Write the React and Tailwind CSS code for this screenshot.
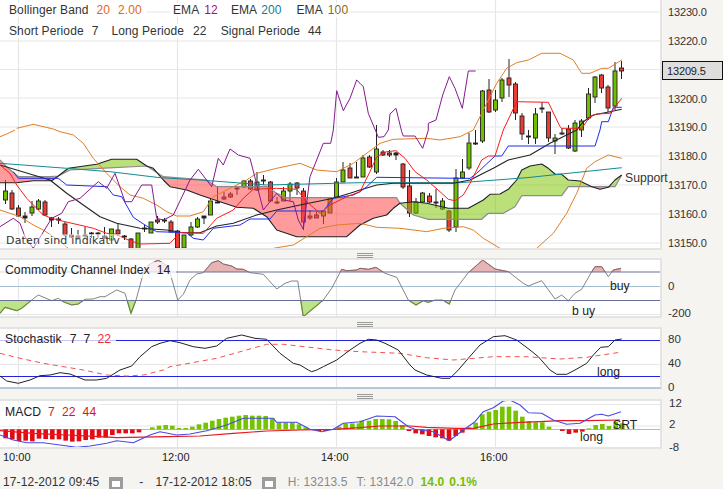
import React from "react";

const P = (ox, oy, pts) => pts.map(([x, y]) => `${(ox + x / 3).toFixed(1)},${(oy + y / 3).toFixed(1)}`);
const Z3 = (pts) => P(0, 130, pts);
const Z4 = (pts) => P(360, 130, pts);
const Z2 = (pts) => P(360, 0, pts);
const Z1 = (pts) => P(0, 0, pts);
const Z5 = (pts) => P(0, 250, pts);
const Z6 = (pts) => P(360, 250, pts);
const Z7 = (pts) => P(0, 370, pts);
const Z8 = (pts) => P(360, 370, pts);
const J = (...a) => a.flat().join(" ");

const candles = [
  [-2,180,204,191,200,"g"],[-1,190,210,193,209,"r"],[0,205,217,208,216,"r"],[1,212,223,216,218,"d"],[2,201,216,207,213,"g"],[3,199,210,201,209,"g"],[4,200,216,202,215,"r"],[5,217,227,218,220,"d"],[6,217,224,219,220,"d"],[7,222,236,224,235,"r"],[8,228,238,235,237,"r"],[9,230,240,236,238,"r"],[10,227,238,235,236,"d"],[11,232,238,233,234,"d"],[12,232,238,233,234,"d"],[13,227,239,236,238,"d"],[14,229,240,229,240,"g"],[15,223,236,230,234,"r"],[16,235,240,236,237,"d"],[17,238,249,239,249,"r"],[18,233,250,233,250,"g"],[19,225,232,228,229,"d"],[20,222,233,222,233,"g"],[21,216,224,220,222,"r"],[22,218,223,220,221,"d"],[23,220,232,222,232,"r"],[24,230,250,231,248,"r"],[25,235,249,235,248,"g"],[26,222,236,227,235,"g"],[27,217,228,219,227,"g"],[28,216,224,216,218,"d"],[29,198,215,201,215,"g"],[30,186,203,202,203,"d"],[31,192,200,197,199,"r"],[32,192,198,194,197,"r"],[33,187,195,188,189,"d"],[34,180,188,181,187,"g"],[35,179,190,181,189,"r"],[36,172,191,182,190,"g"],[37,175,185,180,181,"d"],[38,181,202,182,201,"r"],[39,197,204,202,203,"d"],[40,187,201,191,201,"g"],[41,182,201,184,191,"g"],[42,182,195,183,188,"r"],[43,188,230,191,222,"r"],[44,210,220,216,218,"r"],[45,212,218,215,218,"r"],[46,210,224,211,216,"g"],[47,198,213,198,213,"g"],[48,178,197,182,197,"g"],[49,162,182,170,182,"g"],[50,163,177,168,178,"r"],[51,162,178,177,178,"d"],
  [52,155,177,158,177,"g"],[53,155,168,157,167,"r"],[54,125,174,149,172,"g"],[55,150,156,152,155,"r"],[56,150,157,153,155,"r"],[57,152,160,153,155,"d"],[58,163,189,164,187,"r"],[59,170,217,186,213,"r"],[60,198,214,202,213,"g"],[61,192,203,193,202,"g"],[62,193,203,196,202,"r"],[63,189,208,202,203,"r"],[64,198,210,201,209,"g"],[65,210,232,211,230,"r"],[66,169,232,178,227,"g"],[67,159,179,172,178,"g"],[68,133,170,143,168,"g"],[69,130,145,143,144,"d"],[70,90,143,91,141,"g"],[71,79,113,90,112,"r"],[72,90,112,100,110,"g"],[73,78,102,80,98,"g"],[74,59,97,78,85,"r"],[75,82,120,84,113,"r"],[76,113,140,116,134,"r"],[77,130,144,136,137,"d"],[78,108,144,114,138,"g"],[79,102,113,108,109,"d"],[80,112,142,112,138,"r"],[81,134,154,138,141,"g"],[82,128,135,133,134,"g"],[83,125,149,129,148,"r"],[84,120,152,123,151,"g"],[85,119,137,121,130,"g"],[86,88,120,94,118,"g"],[87,76,103,77,97,"g"],[88,74,93,75,88,"r"],[89,85,112,87,108,"r"],[90,62,110,71,106,"g"],[91,61,79,68,71,"r"],
];

const candleColor = { g: "#6fbe00", r: "#e93c36", d: "#222222" };

function Candles() {
  return candles.map(([k, hi, lo, top, bot, c]) => {
    const x = Math.round((18.5 + 6.625 * k) * 2) / 2;
    return (
      <g key={k}>
        <line x1={x} x2={x} y1={hi} y2={lo} stroke="#222" strokeWidth="1" />
        <rect x={x - 2} y={top} width="4" height={bot - top} fill={candleColor[c]} stroke="#222" strokeWidth="0.9" />
      </g>
    );
  });
}

const spanA = J(Z3([[0,90],[25,115],[55,140],[150,140],[175,138],[210,120],[300,115],[440,108],[490,140],[620,150],[650,170],[800,170],[830,190],[860,203]]), Z4([[110,203],[120,220],[160,255],[205,268],[365,268],[385,250],[430,250],[465,230],[485,197],[605,197],[625,170],[765,170],[785,135]]));
const spanB = J(Z3([[0,158],[50,158],[100,152],[155,152],[175,138],[205,115],[290,103],[335,88],[410,88],[440,108],[460,115],[490,150],[510,170],[560,180],[600,195],[660,215],[710,232],[760,235],[800,260],[830,300],[890,320],[1040,320],[1080,285]]), Z4([[40,265],[80,255],[100,235],[120,220],[160,215],[200,220],[265,235],[325,235],[370,210],[390,193],[420,192],[445,178],[470,150],[485,120],[510,108],[545,102],[565,115],[585,132],[605,133],[625,150],[660,153],[695,170],[720,178],[745,172],[765,150],[785,135]]));

const redCloud1 = J(Z3([[0,90],[25,115],[55,140],[150,140],[175,138],[155,152],[100,152],[50,158],[0,158]]));
const greenCloud1 = J(Z3([[175,138],[205,115],[290,103],[335,88],[410,88],[440,108],[300,115],[210,120]]));
const redCloud2 = J(Z3([[440,108],[490,140],[620,150],[650,170],[800,170],[830,190],[860,203]]), Z4([[110,203],[120,220],[100,235],[80,255],[40,265],[0,285]]), Z3([[1040,320],[890,320],[830,300],[800,260],[760,235],[710,232],[660,215],[600,195],[560,180],[510,170],[490,150],[460,115]]));
const greenCloud2 = J(Z4([[120,220],[160,215],[200,220],[265,235],[325,235],[370,210],[390,193],[420,192],[445,178],[470,150],[485,120],[510,108],[545,102],[565,115],[585,132],[605,133],[625,150],[660,153],[695,170],[625,170],[605,197],[485,197],[465,230],[430,250],[385,250],[365,268],[205,268],[160,255]]));
const redCloud3 = J(Z4([[695,170],[720,178],[745,172]]));
const greenCloud3 = J(Z4([[745,172],[765,150],[785,135],[765,170]]));

const orangeUp = J(Z1([[50,385],[100,373],[160,387]]), Z3([[180,5],[220,15],[250,40],[280,85],[320,130],[360,170],[390,195],[430,205],[470,225],[500,245],[530,258],[570,258],[610,245],[640,200],[700,170],[740,150],[770,130],[830,115],[900,100],[950,120],[1010,125],[1060,100]]), Z4([[0,85],[60,40],[100,28],[200,25],[240,30],[300,20],[340,0]]), Z2([[380,310],[410,250],[440,205],[470,188],[505,180],[545,160],[600,160],[640,180],[665,220],[690,220],[725,205],[745,205],[785,180]]));
const orangeUpL = J(Z3([[0,20],[20,12],[45,0]]));
const orangeLow1 = J(Z3([[0,240],[60,260],[100,285],[130,300],[175,330],[205,355]]));
const orangeLow2 = J(Z3([[820,355],[880,345],[920,320],[960,295],[1010,285],[1080,280]]), Z4([[50,292],[120,295],[200,305],[250,295],[310,290],[340,300],[370,325],[420,355]]));
const orangeLow3 = J(Z4([[530,355],[580,310],[620,250],[650,190],[680,115],[705,95],[745,75],[785,85]]));

const purple = J(Z3([[0,290],[40,265],[60,280],[75,320],[100,355],[115,330],[155,265],[185,250],[205,215],[240,205],[295,155],[320,175],[345,130],[375,215],[395,215],[425,165],[455,165],[470,265],[490,270],[520,255],[570,150],[595,118],[635,170],[655,85],[670,105],[690,57],[715,75],[750,85],[790,240],[830,190],[850,210],[880,215],[895,270],[910,298],[930,140],[970,40],[992,40],[1000,0]]), Z1([[1010,272],[1030,332],[1050,295],[1070,240]]), Z2([[0,250],[10,260],[25,340],[48,395]]), Z4([[55,22],[72,20],[85,0]]), Z2([[90,342],[108,325],[125,395]]), Z4([[130,18],[165,18],[188,55],[205,0]]), Z2([[205,370],[228,360],[248,285],[268,230],[285,265],[307,325],[325,213],[347,213]]));

const redLine = J(Z3([[0,105],[30,130],[50,165],[80,205],[110,235],[130,255],[155,265],[195,275],[260,290],[280,295],[320,310],[345,312],[385,330],[420,342],[510,340],[540,308],[610,310],[650,265],[700,240],[730,205],[760,178],[830,175],[890,178],[920,215],[960,250],[990,225],[1040,200],[1080,185]]), Z4([[30,125],[50,80],[80,65],[108,62],[135,85],[165,125],[200,150],[240,185],[265,208],[285,212],[310,195],[330,160],[365,90],[385,78],[405,78],[430,0]]), Z2([[470,305],[565,307],[600,380],[605,385],[665,385],[690,350],[710,342],[750,340],[785,295]]));
const blueLine = J(Z3([[40,125],[55,145],[175,145],[200,165],[320,170],[340,195],[365,200],[400,262],[435,285],[470,305],[560,308],[580,325],[610,330],[640,295],[720,285],[750,267],[810,267],[830,243],[970,243],[1000,205],[1030,200],[1060,195],[1080,185]]), Z4([[20,170],[50,142],[300,145],[330,145],[350,130],[405,78],[425,78],[445,48],[705,48],[720,0]]), Z2([[725,365],[745,365],[760,322],[785,322]]));
const blackLine = J(Z3([[0,105],[50,120],[100,135],[150,150],[200,190],[250,225],[300,260],[350,280],[420,295],[500,300],[550,308],[600,308],[650,288],[700,280],[770,255],[830,240],[900,225],[1000,205],[1050,190],[1080,180]]), Z4([[50,165],[100,160],[280,160],[330,150],[400,115],[445,90],[510,75],[570,40],[650,0]]), Z2([[670,365],[700,345],[750,335],[785,328]]));
const teal = J(Z3([[0,100],[200,115],[330,125],[480,143],[600,150],[800,165],[1080,158]]), Z4([[300,158],[500,143],[785,113]]));

const cci = J(Z5([[0,190],[15,172],[50,182],[65,175],[95,150],[115,135],[155,152],[175,145],[190,155],[215,165],[235,162],[255,148],[280,147],[300,140],[315,140],[350,120],[375,130],[393,190],[408,150],[430,70],[445,45],[475,30],[505,50],[533,150],[550,133],[570,90],[590,72],[610,68],[635,38],[655,32],[670,42],[695,48],[710,57],[730,58],[750,68],[790,73],[830,117],[855,100],[875,93],[893,93],[910,200],[970,150],[995,115],[1025,58],[1040,62],[1070,60]]), Z6([[0,55],[25,58],[48,52],[75,70],[110,82],[145,150],[168,165],[190,152],[205,157],[225,150],[248,150],[268,162],[285,120],[325,68],[368,30],[405,57],[445,65],[490,100],[505,108],[545,92],[585,147],[605,135],[625,152],[645,130],[665,118],[695,65],[705,50],[725,50],[745,80],[760,60],[783,55]]));
const stoch = J(Z7([[0,18],[20,33],[55,40],[90,30],[120,17],[150,15],[180,8],[210,12],[255,30],[290,30],[320,25],[360,0]]), Z5([[395,348],[420,320],[455,290],[480,280],[510,272],[540,278],[580,290],[615,295],[650,288],[680,265],[725,255],[765,265],[800,268],[840,310],[880,340],[900,345]]), Z7([[925,0],[935,5],[950,0]]), Z5([[970,350],[1010,330],[1050,300]]), Z6([[0,280],[25,268],[50,270],[75,280],[115,300],[150,345]]), Z8([[165,0],[200,15],[245,25],[270,25],[295,0]]), Z6([[325,325],[360,285],[400,260],[435,257],[470,270],[510,300],[535,320]]), Z8([[570,0],[590,13],[620,13],[645,0]]), Z6([[680,340],[700,315],[722,292],[745,290],[765,270],[785,267]]));
const stochD = J(Z5([[0,310],[60,325],[130,340]]), Z7([[250,0],[320,15],[380,18],[430,15],[490,0]]), Z5([[510,350],[650,325],[800,283],[850,283],[1000,300],[1080,305]]), Z6([[120,310],[200,323],[280,330],[400,320],[500,320],[600,327],[680,322],[780,307]]));

const macdLeft = [[17,205],[37,208],[57,213],[77,212],[97,214],[117,206],[137,207],[157,208],[177,208],[197,212],[217,215],[237,214],[257,210],[277,208],[297,203],[317,203],[337,195],[357,190],[377,190],[397,190],[417,187],[457,172],[477,167],[497,165],[517,167],[537,174],[557,174],[577,170],[597,163],[617,158],[637,152],[657,147],[677,143],[697,140],[717,137],[737,135],[757,137],[777,137],[797,138],[817,145],[837,157],[857,157],[877,157],[897,163],[917,172],[957,183],[977,183],[1017,170],[1037,160],[1057,160],[1077,160]];
const macdRight = [[5,152],[27,152],[47,147],[67,147],[87,148],[107,153],[127,165],[147,183],[167,190],[187,193],[207,198],[227,202],[247,205],[267,212],[287,198],[307,188],[327,172],[347,158],[367,133],[387,125],[407,120],[427,110],[447,110],[467,122],[487,140],[507,153],[527,157],[547,157],[567,170],[607,183],[627,192],[647,188],[667,185],[687,175],[707,165],[727,162],[747,168],[767,155],[787,160]];
const macdBlue = J(Z7([[0,195],[40,210],[80,218],[130,218],[180,225],[230,232],[270,228],[320,220],[350,212],[400,218],[450,195],[480,185],[530,195],[570,192],[620,182],[680,165],[730,145],[820,145],[830,157],[890,157],[930,178],[965,185],[1000,178],[1030,160]]), Z8([[0,155],[50,138],[105,140],[145,170],[165,178],[220,185],[268,212],[310,180],[345,155],[370,125],[400,113],[430,93],[450,90],[480,105],[505,128],[545,130],[580,150],[620,163],[660,160],[705,135],[725,133],[745,138],[783,125]]));
const macdRed = J(Z7([[0,182],[100,190],[200,195],[300,200],[350,203],[500,200],[600,198],[700,190],[800,183],[900,180],[1000,178]]), Z8([[0,173],[60,168],[150,168],[200,172],[290,175],[340,175],[400,162],[480,157],[540,155],[600,152],[680,152],[780,150]]));

const Line = ({ pts, c, w = 1, dash, o }) => (
  <polyline points={pts} fill="none" stroke={c} strokeWidth={w} strokeDasharray={dash} strokeOpacity={o} strokeLinejoin="round" />
);

const VGrid = ({ y1, y2 }) => [18.5, 177.5, 336.5, 495.5].map((x) => <line key={x} x1={x} x2={x} y1={y1} y2={y2} stroke="#e6e6e6" strokeWidth="1.2" />);
const HGrid = ({ ys, c = "#e6e6e6", w = 1.2 }) => ys.map((y) => <line key={y} x1="0" x2="662" y1={y} y2={y} stroke={c} strokeWidth={w} />);

function Strip({ h }) {
  return (
    <div className={`flex items-end w-[662px] pl-[357px] ${h}`}>
      <div className="w-[16px] flex flex-col gap-[1px]">
        <div className="h-[1px] bg-[#9a9a9a]" />
        <div className="h-[1px] bg-[#9a9a9a]" />
        <div className="h-[1px] bg-[#9a9a9a]" />
      </div>
    </div>
  );
}

function PriceAxis() {
  const labels = ["13230.0", "13220.0", "13210.0", "13200.0", "13190.0", "13180.0", "13170.0", "13160.0", "13150.0"];
  return (
    <div className="relative flex-1 pt-[5px] pl-[6px] flex flex-col gap-[14.9px] text-[11px] leading-[14px] tracking-[-0.15px] text-[#333]">
      {labels.map((l) => (l === "13210.0" ? <div key={l} className="h-[14px]" /> : <div key={l} className="h-[14px]">{l}</div>))}
      <div className="absolute left-0 top-[61px] w-[61px] h-[19px] bg-[#dedede] border border-[#111] pl-[4px] leading-[18px] text-[#222]">13209.5</div>
    </div>
  );
}

const Cal = () => (
  <span className="w-[14px] h-[12px] bg-[#9c9c9c] flex items-center justify-center pt-[1px]">
    <span className="w-[8px] h-[6px] bg-white" />
  </span>
);

export default function App() {
  return (
    <div className="w-[723px] h-[489px] overflow-hidden bg-[#f5f4f1] flex flex-col text-[#333] font-['Liberation_Sans',sans-serif]">
      <div className="flex h-[250px]">
        <div className="relative w-[662px] bg-white border-r-2 border-b-2 border-[#e4e4e4]">
          <svg className="block" width="660" height="248" viewBox="0 0 660 248">
            <VGrid y1={0} y2={248} />
            <HGrid ys={[12, 41, 69.5, 98, 127, 156, 185, 214, 243]} />
            <Candles />
            <polygon points={redCloud1} fill="#ff4848" fillOpacity=".55" />
            <polygon points={greenCloud1} fill="#7cc400" fillOpacity=".52" />
            <polygon points={redCloud2} fill="#ff4848" fillOpacity=".55" />
            <polygon points={greenCloud2} fill="#7cc400" fillOpacity=".52" />
            <polygon points={redCloud3} fill="#ff4848" fillOpacity=".55" />
            <polygon points={greenCloud3} fill="#7cc400" fillOpacity=".52" />
            <Line pts={spanA} c="#8c8c8c" w={1.2} />
            <Line pts={spanB} c="#222" w={1.1} />
            <Line pts={orangeUp} c="#e07f26" />
            <Line pts={orangeUpL} c="#e07f26" />
            <Line pts={orangeLow1} c="#e07f26" />
            <Line pts={orangeLow2} c="#e07f26" />
            <Line pts={orangeLow3} c="#e07f26" />
            <Line pts={teal} c="#128a94" />
            <Line pts={blackLine} c="#222" w={1.1} />
            <Line pts={blueLine} c="#1c2cf0" />
            <Line pts={redLine} c="#f81c1c" />
            <Line pts={purple} c="#861a8c" />
          </svg>
          <div className="absolute left-0 top-[3px] flex flex-col gap-[7px] text-[12px] leading-[14px] tracking-[0.1px]">
            <div className="flex">
              <div className="flex w-[147px] pl-[9px] bg-white/90">
                <span>Bollinger Band</span>
                <span className="ml-[8px] text-[#df6a12]">20</span>
                <span className="ml-[8px] text-[#df6a12]">2.00</span>
              </div>
              <div className="flex ml-[23px] w-[172px] pl-[3px] bg-white/90">
                <span>EMA</span>
                <span className="ml-[5px] text-[#a4107c]">12</span>
                <span className="ml-[13px]">EMA</span>
                <span className="ml-[4px] text-[#10808e]">200</span>
                <span className="ml-[15px]">EMA</span>
                <span className="ml-[5px] text-[#8c6a20]">100</span>
              </div>
            </div>
            <div className="flex w-[330px] pl-[9px] bg-white/90">
              <span>Short Periode</span>
              <span className="ml-[8px]">7</span>
              <span className="ml-[13px]">Long Periode</span>
              <span className="ml-[9px]">22</span>
              <span className="ml-[14px]">Signal Periode</span>
              <span className="ml-[8px]">44</span>
            </div>
          </div>
          <div className="absolute left-[5px] top-[234px] px-[1px] bg-white/50 font-['DejaVu_Sans',sans-serif] text-[11px] leading-[13px] tracking-[0.2px] text-[#333]">Daten sind indikativ</div>
          <div className="absolute left-[625px] top-[170px] text-[12.2px] leading-[16px] text-[#333]">Support</div>
        </div>
        <PriceAxis />
      </div>
      <Strip h="h-[8px]" />
      <div className="flex h-[60px]">
        <div className="relative w-[662px] bg-white border-t-2 border-r-2 border-b-2 border-[#e4e4e4]">
          <svg className="block" width="660" height="56" viewBox="0 260 660 56">
            <defs>
              <clipPath id="cciTop"><rect x="0" y="255" width="660" height="17" /></clipPath>
              <clipPath id="cciBot"><rect x="0" y="300.5" width="660" height="20" /></clipPath>
            </defs>
            <VGrid y1={258} y2={318} />
            <HGrid ys={[314.5]} />
            <line x1="0" x2="662" y1="286.5" y2="286.5" stroke="#a4bfd2" strokeWidth="1.2" />
            <polygon points={`0,272 ${cci} 621,272`} clipPath="url(#cciTop)" fill="#e5b4b4" />
            <polygon points={`0,300.5 ${cci} 621,300.5`} clipPath="url(#cciBot)" fill="#bde388" />
            <polyline points={cci} clipPath="url(#cciTop)" fill="none" stroke="#d86a6a" strokeWidth="1" />
            <polyline points={cci} clipPath="url(#cciBot)" fill="none" stroke="#7cb810" strokeWidth="1.2" />
            <Line pts={cci} c="#6e6e6e" w={1} o={0.85} />
            <line x1="0" x2="662" y1="272" y2="272" stroke="#6a6f96" strokeWidth="1.1" />
            <line x1="0" x2="662" y1="300.5" y2="300.5" stroke="#6a6f96" strokeWidth="1.1" />
          </svg>
          <div className="absolute left-0 top-[2px] w-[176px] pl-[5px] flex bg-white/75 text-[12.2px] leading-[16px] tracking-[0.05px] text-[#222]">
            <span>Commodity Channel Index</span>
            <span className="ml-[7px]">14</span>
          </div>
          <div className="absolute left-[610px] top-[18px] text-[12.2px] leading-[16px] text-[#222]">buy</div>
          <div className="absolute left-[572px] top-[43px] text-[12.2px] leading-[16px] text-[#222]">b uy</div>
        </div>
        <div className="flex-1 pl-[6px] pt-[21px] flex flex-col gap-[13px] text-[11.5px] leading-[14px] text-[#333]">
          <div>0</div>
          <div>-200</div>
        </div>
      </div>
      <Strip h="h-[9px]" />
      <div className="flex h-[62px]">
        <div className="relative w-[662px] bg-white border-t-2 border-r-2 border-[#e4e4e4] border-b-2 border-b-[#b8c8d6]">
          <svg className="block" width="660" height="58" viewBox="0 329 660 58">
            <VGrid y1={327} y2={389} />
            <HGrid ys={[364.5]} />
            <line x1="0" x2="662" y1="340.5" y2="340.5" stroke="#2222e0" strokeWidth="1.1" />
            <line x1="0" x2="662" y1="376.5" y2="376.5" stroke="#2222e0" strokeWidth="1.1" />
            <Line pts={stochD} c="#f85050" dash="5 4" />
            <Line pts={stoch} c="#222" w={1} />
          </svg>
          <div className="absolute left-0 top-[2px] pl-[5px] w-[116px] flex bg-white/75 text-[12.2px] leading-[16px] tracking-[0.05px] text-[#222]">
            <span>Stochastik</span>
            <span className="ml-[8px]">7</span>
            <span className="ml-[7px]">7</span>
            <span className="ml-[7px] text-[#f03030]">22</span>
          </div>
          <div className="absolute left-[597px] top-[35px] text-[12.2px] leading-[16px] text-[#222]">long</div>
        </div>
        <div className="flex-1 pl-[6px] pt-[5px] flex flex-col gap-[10px] text-[11.5px] leading-[14px] text-[#333]">
          <div>80</div>
          <div>40</div>
          <div>0</div>
        </div>
      </div>
      <Strip h="h-[10px]" />
      <div className="flex h-[50px]">
        <div className="relative w-[662px] bg-white border-t-2 border-r-2 border-b-2 border-[#e4e4e4]">
          <svg className="block" width="660" height="46" viewBox="0 401 660 46">
            <VGrid y1={399} y2={449} />
            <HGrid ys={[404.5, 426]} />
            <line x1="0" x2="662" y1="429.5" y2="429.5" stroke="#b8b8b8" strokeWidth="1" />
            {macdLeft.map(([x, y]) => (
              <rect key={`l${x}`} x={x / 3 - 2.3} y={370 + Math.min(y, 178) / 3} width="4.6" height={Math.abs(y - 178) / 3} fill={y > 178 ? "#e30a14" : "#74c400"} />
            ))}
            {macdRight.map(([x, y]) => (
              <rect key={`r${x}`} x={360 + x / 3 - 2.3} y={370 + Math.min(y, 178) / 3} width="4.6" height={Math.abs(y - 178) / 3} fill={y > 178 ? "#e30a14" : "#74c400"} />
            ))}
            <Line pts={macdRed} c="#e8181c" w={1.2} />
            <Line pts={macdBlue} c="#4a4ae6" w={1.1} />
          </svg>
          <div className="absolute left-0 top-[2px] pl-[5px] w-[100px] h-[23px] flex pt-[1px] bg-white/90 text-[12.2px] leading-[16px] tracking-[0.05px] text-[#222]">
            <span>MACD</span>
            <span className="ml-[7px] text-[#d81818]">7</span>
            <span className="ml-[7px] text-[#d81818]">22</span>
            <span className="ml-[7px] text-[#d81818]">44</span>
          </div>
          <div className="absolute left-[580px] top-[28px] text-[12.2px] leading-[16px] text-[#222]">long</div>
          <div className="absolute left-[613px] top-[16px] text-[12.2px] leading-[16px] text-[#222]">SRT</div>
        </div>
        <div className="flex-1 pl-[7px] flex flex-col text-[11.5px] leading-[14px] text-[#333] -mt-[3px]">
          <div>12</div>
          <div className="mt-[7px]">2</div>
          <div className="mt-[9px]">-8</div>
        </div>
      </div>
      <div className="h-[22px] w-[662px] flex text-[11px] leading-[14px] text-[#222] pl-[3px] pt-[1px]">
        <div className="w-[159px]">10:00</div>
        <div className="w-[159px]">12:00</div>
        <div className="w-[159px]">14:00</div>
        <div className="w-[120px]">16:00</div>
      </div>
      <div className="flex-1 flex items-end text-[12px] leading-[14px] tracking-[0.1px] pl-[3px] text-[#333]">
        <span>17-12-2012 09:45</span>
        <span className="ml-[10px]"><Cal /></span>
        <span className="ml-[16px]">-</span>
        <span className="ml-[12px]">17-12-2012 18:05</span>
        <span className="ml-[10px]"><Cal /></span>
        <span className="ml-[12px] text-[#8a8a8a]">H: 13213.5</span>
        <span className="ml-[9px] text-[#8a8a8a]">T: 13142.0</span>
        <span className="ml-[7px] font-bold text-[#72c000]">14.0</span>
        <span className="ml-[5px] font-bold text-[#72c000]">0.1%</span>
      </div>
    </div>
  );
}
